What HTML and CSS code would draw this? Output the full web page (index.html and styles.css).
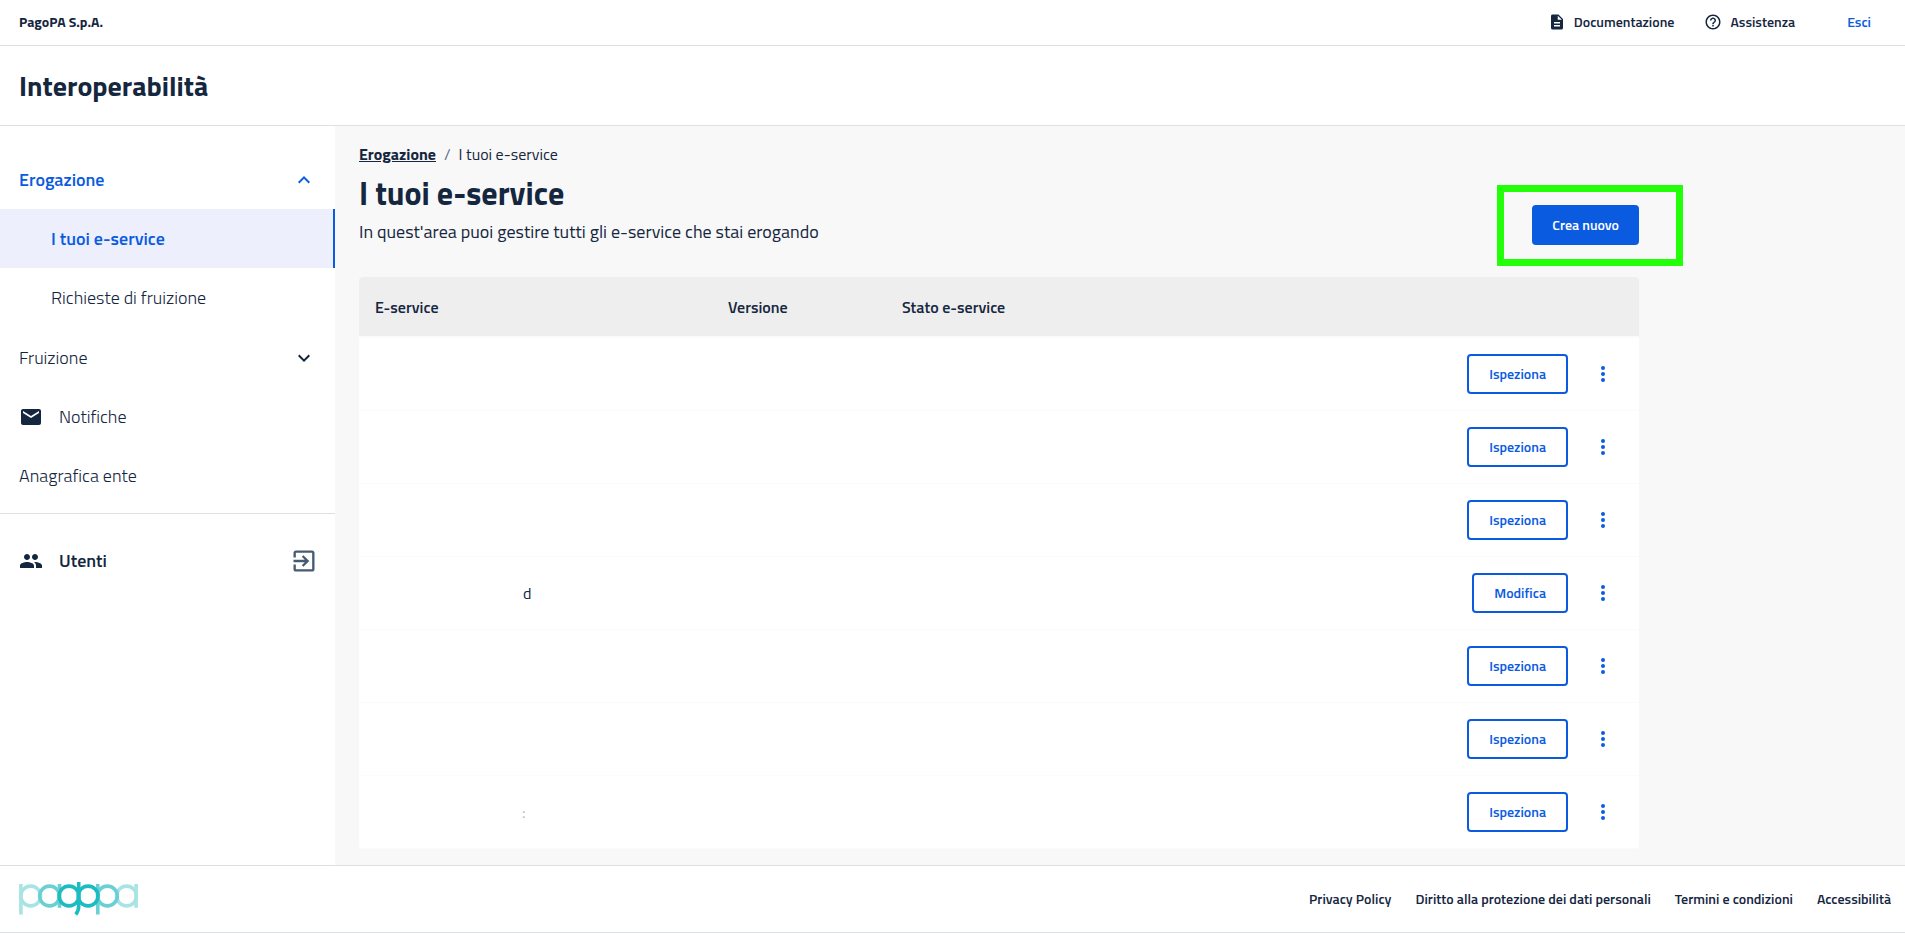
FILE: index.html
```html
<!DOCTYPE html>
<html lang="it">
<head>
<meta charset="utf-8">
<meta name="viewport" content="width=device-width, initial-scale=1">
<title>I tuoi e-service - Interoperabilità</title>
<link rel="stylesheet" href="styles.css">
</head>
<body>
<svg class="sprite" aria-hidden="true">
  <symbol id="more" viewBox="0 0 24 24"><circle cx="12" cy="6" r="2"/><circle cx="12" cy="12" r="2"/><circle cx="12" cy="18" r="2"/></symbol>
</svg>
<header class="topbar">
  <span class="company">PagoPA S.p.A.</span>
  <nav class="toplinks">
    <a href="#"><svg class="icon-s" viewBox="0 0 24 24"><path d="M14 2H6c-1.100 0-1.990.9-1.990 2L4 20c0 1.100.89 2 1.990 2H18c1.100 0 2-.9 2-2V8l-6-6zm2 16H8v-2h8v2zm0-4H8v-2h8v2zm-3-5V3.500L18.500 9H13z"/></svg>Documentazione</a>
    <a href="#"><svg class="icon-s" viewBox="0 0 24 24"><path d="M11 18h2v-2h-2v2zm1-16C6.480 2 2 6.480 2 12s4.480 10 10 10 10-4.480 10-10S17.520 2 12 2zm0 18c-4.410 0-8-3.590-8-8s3.590-8 8-8 8 3.590 8 8-3.590 8-8 8zm0-14c-2.210 0-4 1.790-4 4h2c0-1.100.9-2 2-2s2 .9 2 2c0 2-3 1.750-3 5h2c0-2.250 3-2.500 3-5 0-2.210-1.790-4-4-4z"/></svg>Assistenza</a>
    <button class="logout" type="button">Esci</button>
  </nav>
</header>
<div class="product"><span class="product-name">Interoperabilità</span></div>
<div class="body">
  <aside class="sidebar">
    <nav class="nav">
      <button class="item open" type="button">Erogazione<svg class="icon chevron" viewBox="0 0 24 24"><path d="M12 8l-6 6 1.410 1.410L12 10.830l4.590 4.580L18 14z"/></svg></button>
      <div class="group">
        <a class="item sub active" href="#">I tuoi e-service</a>
        <a class="item sub" href="#">Richieste di fruizione</a>
      </div>
      <button class="item" type="button">Fruizione<svg class="icon chevron" viewBox="0 0 24 24"><path d="M16.590 8.590 12 13.170 7.410 8.590 6 10l6 6 6-6z"/></svg></button>
      <a class="item" href="#"><svg class="icon" viewBox="0 0 24 24"><path d="M20 4H4c-1.100 0-1.990.9-1.990 2L2 18c0 1.100.9 2 2 2h16c1.100 0 2-.9 2-2V6c0-1.100-.9-2-2-2zm0 4-8 5-8-5V6l8 5 8-5v2z"/></svg>Notifiche</a>
      <a class="item" href="#">Anagrafica ente</a>
    </nav>
    <a class="item users" href="#"><svg class="icon" viewBox="0 0 24 24"><path d="M16 11c1.660 0 2.990-1.340 2.990-3S17.660 5 16 5c-1.660 0-3 1.340-3 3s1.340 3 3 3zm-8 0c1.660 0 2.990-1.340 2.990-3S9.660 5 8 5C6.340 5 5 6.340 5 8s1.340 3 3 3zm0 2c-2.330 0-7 1.170-7 3.500V19h14v-2.500c0-2.330-4.670-3.500-7-3.500zm8 0c-.29 0-.62.020-.97.050 1.160.84 1.970 1.970 1.970 3.450V19h6v-2.500c0-2.330-4.670-3.500-7-3.500z"/></svg>Utenti<svg class="icon exit" viewBox="0 0 24 24"><path d="M10.090 15.590 11.500 17l5-5-5-5-1.410 1.410L12.670 11H3v2h9.670l-2.580 2.590zM19 3H5c-1.110 0-2 .9-2 2v4h2V5h14v14H5v-4H3v4c0 1.100.89 2 2 2h14c1.100 0 2-.9 2-2V5c0-1.100-.9-2-2-2z"/></svg></a>
  </aside>
  <main class="main">
    <div class="content">
      <nav class="crumbs"><a href="#">Erogazione</a><span class="slash">/</span><span>I tuoi e-service</span></nav>
      <div class="head">
        <div>
          <h1>I tuoi e-service</h1>
          <p class="lead">In quest'area puoi gestire tutti gli e-service che stai erogando</p>
        </div>
        <div class="callout"><button class="btn primary" type="button">Crea nuovo</button></div>
      </div>
      <table class="table">
        <thead><tr><th class="c-name">E-service</th><th class="c-ver">Versione</th><th class="c-state">Stato e-service</th><th></th></tr></thead>
        <tbody>
          <tr><td></td><td></td><td></td><td><div class="actions"><button class="btn" type="button">Ispeziona</button><button class="menu" type="button" aria-label="Altre azioni"><svg><use href="#more"/></svg></button></div></td></tr>
          <tr><td></td><td></td><td></td><td><div class="actions"><button class="btn" type="button">Ispeziona</button><button class="menu" type="button" aria-label="Altre azioni"><svg><use href="#more"/></svg></button></div></td></tr>
          <tr><td></td><td></td><td></td><td><div class="actions"><button class="btn" type="button">Ispeziona</button><button class="menu" type="button" aria-label="Altre azioni"><svg><use href="#more"/></svg></button></div></td></tr>
          <tr><td class="tail">d</td><td></td><td></td><td><div class="actions"><button class="btn" type="button">Modifica</button><button class="menu" type="button" aria-label="Altre azioni"><svg><use href="#more"/></svg></button></div></td></tr>
          <tr><td></td><td></td><td></td><td><div class="actions"><button class="btn" type="button">Ispeziona</button><button class="menu" type="button" aria-label="Altre azioni"><svg><use href="#more"/></svg></button></div></td></tr>
          <tr><td></td><td></td><td></td><td><div class="actions"><button class="btn" type="button">Ispeziona</button><button class="menu" type="button" aria-label="Altre azioni"><svg><use href="#more"/></svg></button></div></td></tr>
          <tr><td class="tail faint">:</td><td></td><td></td><td><div class="actions"><button class="btn" type="button">Ispeziona</button><button class="menu" type="button" aria-label="Altre azioni"><svg><use href="#more"/></svg></button></div></td></tr>
        </tbody>
      </table>
    </div>
  </main>
</div>
<footer class="footer">
  <a href="#" aria-label="PagoPA"><svg class="logo" viewBox="0 0 119 34" stroke-width="3.600">
    <g stroke="#a9e4e5"><circle cx="11.700" cy="14" r="9.900"/><circle cx="107.600" cy="14" r="9.900"/><path d="M1.900 2v30.500M117.100 2v23.800"/></g>
    <g stroke="#6ad0d4"><circle cx="30.600" cy="14" r="9.900"/><circle cx="88.400" cy="14" r="9.900"/><path d="M40.500 2v23.800M78.800 2v30.500"/></g>
    <g stroke="#1cbcc1"><circle cx="50" cy="14" r="9.900"/><circle cx="69.100" cy="14" r="9.900"/><path d="M59.700 0v24q0 5-3 8.500"/></g>
  </svg></a>
  <nav class="legal"><a href="#">Privacy Policy</a><a href="#">Diritto alla protezione dei dati personali</a><a href="#">Termini e condizioni</a><a href="#">Accessibilità</a></nav>
</footer>
</body>
</html>
```
FILE: styles.css
```css
* { box-sizing: border-box; }
body {
  margin: 0;
  min-height: 100vh;
  background: #fff;
  color: #15263f;
  font-family: "Titillium Web", Roboto, sans-serif;
  font-size: 16px;
  line-height: 24px;
}
a { color: inherit; text-decoration: none; }
button { font: inherit; color: inherit; background: none; border: 0; padding: 0; cursor: pointer; }
svg { fill: currentColor; flex: none; }
.sprite { display: none; }

.topbar {
  display: flex;
  align-items: center;
  justify-content: space-between;
  height: 46px;
  padding: 0 34px 2px 19px;
  border-bottom: 1px solid #e0e0e0;
  font-size: 14px;
  font-weight: 600;
}
.company { font-weight: 700; }
.toplinks { display: flex; align-items: center; gap: 30px; }
.toplinks a { display: flex; align-items: center; gap: 8px; }
.icon-s { width: 18px; height: 18px; }
.logout { margin-left: 22px; color: #0b5be1; }

.product {
  display: flex;
  align-items: center;
  height: 80px;
  padding: 0 19px;
  border-bottom: 1px solid #e0e0e0;
}
.product-name { font-size: 28px; font-weight: 700; line-height: 40px; }

.body { display: flex; }
.sidebar { width: 335px; flex: none; padding-top: 24px; background: #fff; }
.nav { padding-bottom: 8px; border-bottom: 1px solid #e0e0e0; }
.group { padding-bottom: 1px; }
.item {
  display: flex;
  align-items: center;
  gap: 16px;
  width: 100%;
  height: 59px;
  padding: 0 19px;
  font-size: 18px;
  font-weight: 300;
  text-align: left;
}
.icon { width: 24px; height: 24px; }
.chevron { margin-left: auto; }
.open { color: #0b5be1; font-weight: 600; }
.sub { padding-left: 51px; }
.active { background: #edf0fc; border-right: 2px solid #0b5be1; color: #0b5be1; font-weight: 600; }
.users { margin-top: 17px; padding-right: 17px; font-weight: 600; }
.exit { width: 28px; height: 28px; margin-left: auto; color: #455b71; }

.main { flex: 1; min-width: 0; padding: 15px 24px 16px; background: #f8f8f8; }
.content { max-width: 1280px; }
.crumbs { display: flex; gap: 8px; line-height: 26px; }
.crumbs a { font-weight: 700; text-decoration: underline; }
.slash { color: #5c6f82; }
.head { display: flex; align-items: flex-end; justify-content: space-between; padding: 5px 0 32px; }
h1 { margin: 0; font-size: 32px; line-height: 42px; font-weight: 700; }
.lead { margin: 4px 0 0; font-size: 18px; line-height: 27px; }
.callout { position: relative; }
.callout::after {
  content: "";
  position: absolute;
  inset: -20px -44px -21px -35px;
  border: 7px solid #22ff08;
  pointer-events: none;
}
.btn {
  height: 40px;
  padding: 0 20px;
  border: 2px solid #0b5be1;
  border-radius: 4px;
  color: #0b5be1;
  font-size: 14px;
  font-weight: 600;
}
.callout .btn { display: block; }
.primary { background: #0b5be1; color: #fff; padding: 0 18px; }

.table { width: 100%; table-layout: fixed; border-collapse: separate; border-spacing: 0; background: #fff; border-radius: 4px; overflow: hidden; }
.table th { height: 61px; padding: 0 16px; background: #eee; border-bottom: 2px solid #fbfbfb; font-size: 16px; font-weight: 600; text-align: left; }
.table td { height: 73px; padding: 0 16px; border-bottom: 1px solid #fbfbfb; }
.c-name { width: 353px; }
.c-ver { width: 174px; }
.c-state { width: 400px; }
.table .tail { padding-left: 164px; }
.table .faint { padding-left: 163px; color: #aab2bb; }
.actions { display: flex; align-items: center; justify-content: flex-end; gap: 15px; }
.menu { display: flex; align-items: center; justify-content: center; width: 40px; height: 40px; color: #0b5be1; }
.menu svg { width: 24px; height: 24px; }

.footer {
  display: flex;
  align-items: center;
  justify-content: space-between;
  height: 68px;
  padding: 0 14px 0 19px;
  border: solid #dcdfe3;
  border-width: 1px 0;
  font-size: 14px;
  font-weight: 600;
}
.logo { display: block; width: 119px; height: 34px; fill: none; }
.legal { display: flex; gap: 24px; }
```
